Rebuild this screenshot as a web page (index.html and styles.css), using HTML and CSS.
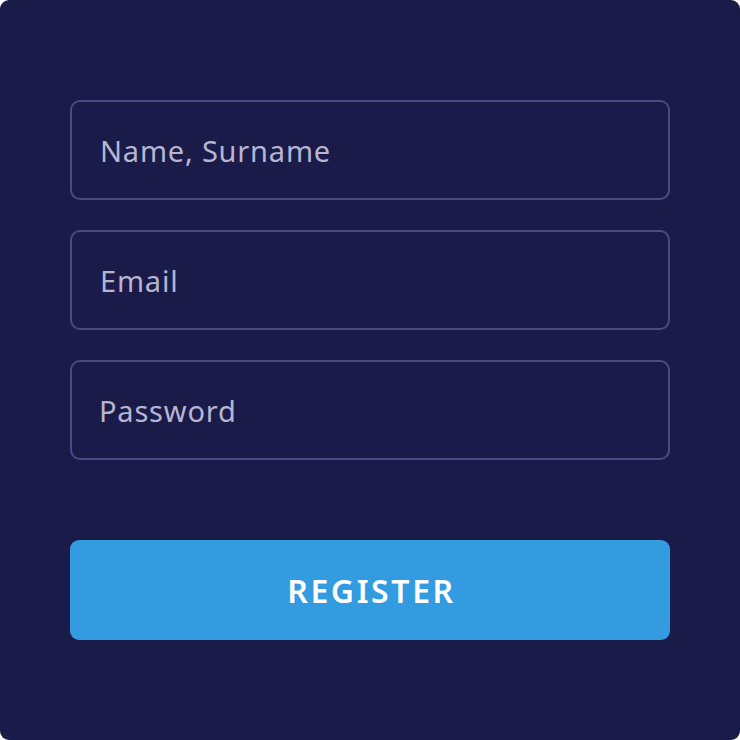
FILE: index.html
```html
<!DOCTYPE html>
<html>
<head>
<meta charset="utf-8">
<link rel="stylesheet" href="styles.css">
</head>
<body>
<div class="card">
  <form class="form">
    <div class="field"><span class="placeholder">Name, Surname</span></div>
    <div class="field"><span class="placeholder">Email</span></div>
    <div class="field"><span class="placeholder pw">Password</span></div>
    <button type="button" class="btn">REGISTER</button>
  </form>
</div>
</body>
</html>
```
FILE: styles.css
```css
html, body {
  margin: 0;
  padding: 0;
  background: #ffffff;
}
.card {
  width: 740px;
  height: 740px;
  box-sizing: border-box;
  background: #1b1b4a;
  border-radius: 9px;
  padding: 100px 70px 0 70px;
}
.form {
  display: flex;
  flex-direction: column;
  gap: 30px;
  width: 600px;
}
.field {
  height: 100px;
  box-sizing: border-box;
  border: 2px solid #4a4a85;
  border-radius: 10px;
  display: flex;
  align-items: center;
  padding-left: 28px;
}
.placeholder {
  font-family: "Noto Sans", sans-serif;
  font-size: 29px;
  color: #b6b6d0;
  letter-spacing: 0.8px;
}
.pw { margin-left: -1px; }
.btn {
  margin-top: 50px;
  height: 100px;
  border: none;
  border-radius: 9px;
  background: #339be0;
  color: #ffffff;
  font-family: "Noto Sans", sans-serif;
  font-weight: 600;
  font-size: 32px;
  letter-spacing: 2.6px;
  padding: 0 0 0 3px;
}
```
